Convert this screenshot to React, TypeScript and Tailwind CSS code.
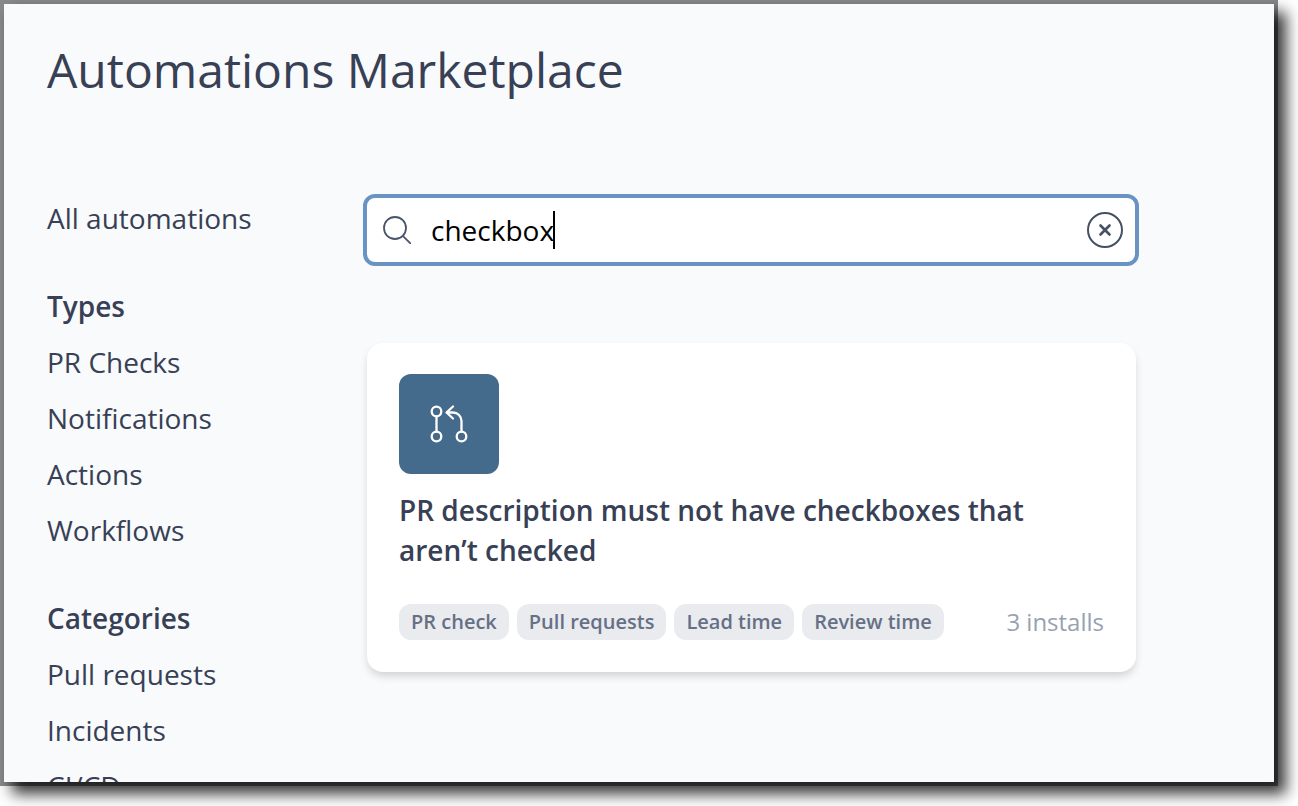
import { useState } from "react";

const types = ["PR Checks", "Notifications", "Actions", "Workflows"];
const categories = ["Pull requests", "Incidents", "CI/CD"];
const tags = ["PR check", "Pull requests", "Lead time", "Review time"];

function NavGroup({ title, items }: { title: string; items: string[] }) {
  return (
    <section className="mt-8">
      <h2 className="font-semibold">{title}</h2>
      <ul>
        {items.map((item) => (
          <li key={item}>
            <a href="#">{item}</a>
          </li>
        ))}
      </ul>
    </section>
  );
}

function SearchBox() {
  const [query, setQuery] = useState("checkbox");
  return (
    <div className="relative -ml-1 -mr-[3px] flex h-[72px] items-center rounded-xl border-4 border-[#6893c2] bg-white pl-4 pr-3">
      <svg className="size-7 shrink-0" viewBox="0 0 28 28" fill="none" stroke="#4b566a" strokeWidth="1.8" aria-hidden="true">
        <circle cx="12" cy="12" r="11" />
        <path d="M19.3 19.3 28 28" />
      </svg>
      <input
        type="text"
        aria-label="Search automations"
        value={query}
        onChange={(e) => setQuery(e.target.value)}
        className="ml-5 h-full min-w-0 flex-1 bg-transparent text-[28px] text-black caret-transparent outline-none"
      />
      {query === "checkbox" && <span className="absolute left-[186px] top-[13px] h-[38px] w-0.5 bg-black" />}
      <button type="button" aria-label="Clear search" onClick={() => setQuery("")} className="shrink-0">
        <svg className="size-9" viewBox="0 0 36 36" fill="none" stroke="#455065" strokeWidth="2">
          <circle cx="18" cy="18" r="17" />
          <path d="M13.5 13.5l9 9M22.5 13.5l-9 9" strokeWidth="2.6" strokeLinecap="round" />
        </svg>
      </button>
    </div>
  );
}

function AutomationCard() {
  return (
    <article className="mt-[77px] rounded-2xl bg-white px-8 pb-8 pt-[31px] shadow-[0_5px_8px_-1px_rgba(0,0,0,0.16)]">
      <div className="size-[100px] rounded-xl bg-[#456b8c]">
        <svg viewBox="0 0 100 100" className="size-full" fill="none" stroke="white" strokeWidth="2.3" strokeLinecap="round" strokeLinejoin="round" aria-hidden="true">
          <circle cx="37.5" cy="37.5" r="4.8" />
          <circle cx="37.5" cy="62.5" r="4.8" />
          <circle cx="62.500" cy="62.500" r="4.8" />
          <path d="M37.500 42.500v15M62.500 57.500V47a8.500 8.500 0 0 0-8.500-8.500h-6M54 32.500l-6.500 6 6.500 6" />
        </svg>
      </div>
      <h3 className="mt-4 text-[28px] font-semibold leading-10">
        PR description must not have checkboxes that aren’t checked
      </h3>
      <div className="mt-[34px] flex items-center justify-between">
        <ul className="flex gap-2">
          {tags.map((tag) => (
            <li key={tag} className="h-9 rounded-xl bg-[#e9ebef] px-3 text-xl font-semibold leading-9 text-[#667085]">
              {tag}
            </li>
          ))}
        </ul>
        <span className="text-2xl text-[#98a1b2]">3 installs</span>
      </div>
    </article>
  );
}

export default function App() {
  return (
    <div className="h-screen overflow-hidden bg-white pb-5 pr-5 font-['Open_Sans',sans-serif] text-[#374055]">
      <div className="h-full bg-[#8b8a8a] p-1">
        <div className="h-full shadow-[10px_10px_14px_2px_rgba(0,0,0,0.78)]">
          <div className="h-full overflow-hidden bg-[#f9fafc] pl-[43px] pr-[138px] pt-[34px]">
            <h1 className="text-5xl leading-[64px]">Automations Marketplace</h1>
            <div className="mt-[92px] flex items-start">
              <nav aria-label="Automations" className="-mt-1 w-80 shrink-0 text-[28px] leading-[56px]">
                <a href="#">All automations</a>
                <NavGroup title="Types" items={types} />
                <NavGroup title="Categories" items={categories} />
              </nav>
              <main className="min-w-0 flex-1">
                <SearchBox />
                <AutomationCard />
              </main>
            </div>
          </div>
        </div>
      </div>
    </div>
  );
}
